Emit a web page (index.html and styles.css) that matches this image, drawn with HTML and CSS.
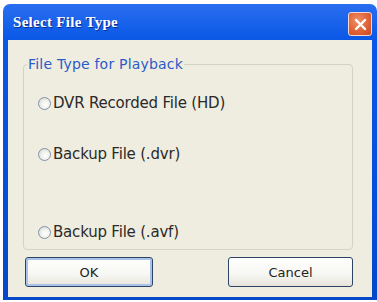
FILE: index.html
```html
<!DOCTYPE html>
<html>
<head>
<meta charset="utf-8">
<link rel="stylesheet" href="styles.css">
</head>
<body>
<div class="window">
  <div class="titlebar">
    <span class="title">Select File Type</span>
    <span class="close">
      <svg width="15" height="15" viewBox="0 0 15 15"><path d="M3 3 L12 12 M12 3 L3 12" stroke="#fff" stroke-width="2.4" stroke-linecap="round"/></svg>
    </span>
  </div>
  <div class="client">
    <fieldset class="group">
      <legend class="legend">File Type for Playback</legend>
      <div class="option first"><span class="radio"></span><span class="label">DVR Recorded File (HD)</span></div>
      <div class="option second"><span class="radio"></span><span class="label">Backup File (.dvr)</span></div>
      <div class="option third"><span class="radio"></span><span class="label">Backup File (.avf)</span></div>
    </fieldset>
    <div class="buttons">
      <button class="btn ok">OK</button>
      <button class="btn cancel">Cancel</button>
    </div>
  </div>
</div>
</body>
</html>
```
FILE: styles.css
```css
html, body {
  margin: 0;
  padding: 0;
  background: #ffffff;
}
.window {
  margin: 4px 0 0 3px;
  width: 374px;
  height: 296px;
  background: linear-gradient(180deg, #2a6ef0 0%, #0a58e6 12%, #0550da 60%, #0548c8 100%);
  border-radius: 7px 7px 0 0;
  display: flex;
  flex-direction: column;
  box-sizing: border-box;
}
.titlebar {
  height: 36px;
  display: flex;
  align-items: center;
  justify-content: space-between;
  padding: 0 5px 0 10px;
  flex: none;
}
.title {
  font-family: "Liberation Serif", serif;
  font-weight: bold;
  font-size: 15px;
  color: #ffffff;
  text-shadow: 1px 1px 0 #0a2f8a;
  letter-spacing: 0.3px;
}
.close {
  width: 24px;
  height: 24px;
  box-sizing: border-box;
  border: 1px solid #f4d8cc;
  border-radius: 3px;
  background: radial-gradient(circle at 40% 35%, #f0926c 0%, #e06238 55%, #c84a22 100%);
  display: flex;
  align-items: center;
  justify-content: center;
  margin-top: 4px;
}
.client {
  flex: 1;
  margin: 0 5px 3px 5px;
  background: #efede0;
  padding: 16px 19px 0 15px;
  display: flex;
  flex-direction: column;
}
.group {
  margin: 0;
  height: 194px;
  box-sizing: border-box;
  border: 1px solid #d4d2c2;
  border-radius: 4px;
  padding: 0;
  display: flex;
  flex-direction: column;
}
.legend {
  font-family: "DejaVu Sans", sans-serif;
  font-size: 14px;
  color: #2a5bc8;
  padding: 0 1px;
  margin-left: 3px;
  letter-spacing: 0.2px;
}
.option {
  display: flex;
  align-items: center;
  gap: 2px;
  margin-left: 14px;
  font-family: "DejaVu Sans", sans-serif;
  font-size: 15px;
  color: #2a2a2a;
  letter-spacing: -0.2px;
}
.option.first { margin-top: 22px; }
.option.second { margin-top: 33px; }
.option.third { margin-top: 60px; }
.radio {
  width: 13px;
  height: 13px;
  box-sizing: border-box;
  border-radius: 50%;
  border: 1px solid #7f93ad;
  background: radial-gradient(circle at 60% 60%, #ffffff 0%, #f2f2ee 40%, #d3d3cb 100%);
  flex: none;
}
.buttons {
  display: flex;
  justify-content: space-between;
  margin-top: 7px;
  padding-left: 2px;
}
.btn {
  height: 30px;
  box-sizing: border-box;
  border: 1px solid #2d4466;
  border-radius: 3px;
  background: linear-gradient(180deg, #ffffff 0%, #f6f6f2 60%, #e6e4da 100%);
  font-family: "DejaVu Sans", sans-serif;
  font-size: 13px;
  color: #222;
  padding: 0;
}
.ok {
  width: 128px;
  box-shadow: inset 0 0 0 2px #a9c2e8;
}
.cancel {
  width: 125px;
}
```
